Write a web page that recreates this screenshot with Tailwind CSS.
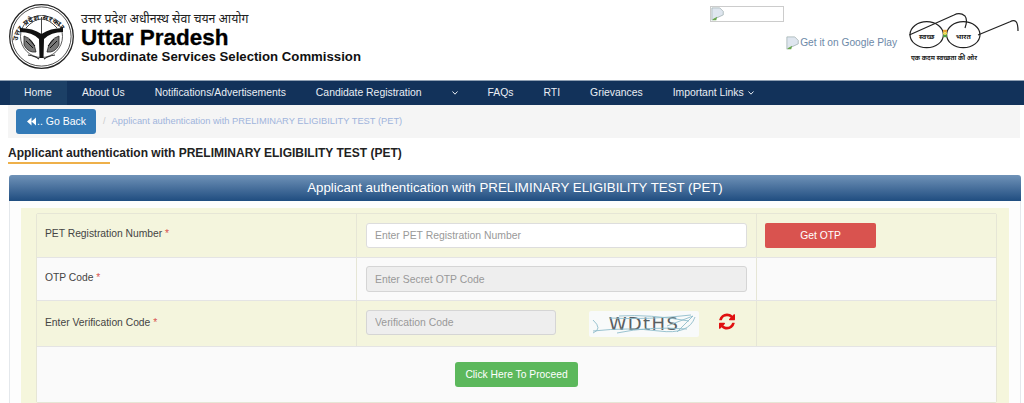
<!DOCTYPE html>
<html lang="en">
<head>
  <meta charset="UTF-8" />
  <meta name="viewport" content="width=device-width, initial-scale=1.0" />
  <title>UPSSSC PET Authentication</title>
  <script src="https://cdn.jsdelivr.net/npm/@tailwindcss/browser@4"></script>
</head>
<body class="bg-white h-screen overflow-hidden font-['Liberation_Sans','Noto_Sans',sans-serif] text-[#333]">

  <!-- Header -->
  <header class="h-[80px] flex">
    <svg class="w-[66px] h-[66px] mt-[4px] ml-[9px] shrink-0" viewBox="0 0 66 66">
      <circle cx="32.5" cy="32.5" r="31.8" fill="none" stroke="#222" stroke-width="1.3" />
      <circle cx="32.5" cy="32.5" r="29.6" fill="none" stroke="#222" stroke-width="0.8" />
      <circle cx="32.5" cy="32.5" r="21" fill="none" stroke="#333" stroke-width="0.8" />
      <path id="ring" d="M8.5 40 A23.5 23.5 0 1 1 56.5 40" fill="none" />
      <text font-size="7.4" font-weight="700" fill="#222" letter-spacing="0.5" font-family="'Noto Sans','Liberation Sans',sans-serif"><textPath href="#ring" startOffset="3">उत्तर प्रदेश सरकार</textPath></text>
      <path d="M32.5 13 V30 M17 24 Q32.5 6 48 24" fill="none" stroke="#333" stroke-width="0.9" />
      <path d="M11 24 Q24 24 32.5 30 Q41 24 54 24 L54 28 Q42 28 35 35 L34.5 54 L30.5 54 L30 35 Q23 28 11 28 Z" fill="#111" />
      <path d="M15 32 Q25 35 27 48 Q19 49 15 41 Z M50 32 Q40 35 38 48 Q46 49 50 41 Z" fill="#777" stroke="#222" stroke-width="0.8" />
      <path d="M17 37 L24 44 M20 35 L26 42 M48 37 L41 44 M45 35 L39 42" stroke="#111" stroke-width="1" />
      <path d="M19 51 Q26 52 30 55 M46 51 Q39 52 35 55" fill="none" stroke="#222" stroke-width="1.2" />
    </svg>
    <div class="ml-[6px] pt-[10px] shrink-0">
      <div class="text-[12.3px] leading-[17px] text-[#222] font-['Noto_Sans','Liberation_Serif',serif]">उत्तर प्रदेश अधीनस्थ सेवा चयन आयोग</div>
      <div class="text-[22.5px] leading-[22px] font-bold text-black [-webkit-text-stroke:0.3px_black]">Uttar Pradesh</div>
      <div class="text-[13.2px] leading-[16px] font-bold text-[#111]">Subordinate Services Selection Commission</div>
    </div>
    <div class="ml-auto w-[314px] flex shrink-0">
      <div class="w-[198px]">
        <div class="w-[74px] h-[16px] mt-[6px] border border-[#ccc] flex">
          <svg class="w-[14px] h-[14px]" viewBox="0 0 16 16">
            <path d="M1 1 H10 L14 5 V9 L1 15 Z" fill="#dfe6ef" stroke="#9aa" stroke-width="0.8" />
            <path d="M2 14 L7 11 L6 15 H2 Z" fill="#6aa84f" />
          </svg>
        </div>
        <div class="flex justify-end items-center mt-[14px] pr-[11px] text-[10.2px] text-[#6d89a8] leading-[14px]">
          <svg class="w-[14px] h-[14px] shrink-0" viewBox="0 0 16 16">
            <path d="M1 1 H10 L14 5 V9 L1 15 Z" fill="#dfe6ef" stroke="#9aa" stroke-width="0.8" />
            <path d="M2 14 L7 11 L6 15 H2 Z" fill="#6aa84f" />
          </svg>
          <span>Get it on Google Play</span>
        </div>
      </div>
      <svg class="w-[112px] h-[66px] block shrink-0" viewBox="0 0 112 66">
        <ellipse cx="18.7" cy="34.7" rx="16.7" ry="13" fill="none" stroke="#222" stroke-width="1.2" />
        <ellipse cx="55.3" cy="34.7" rx="16.7" ry="13" fill="none" stroke="#222" stroke-width="1.2" />
        <path d="M35 31 H39" stroke="#e8a33a" stroke-width="2.4" />
        <path d="M35 33.5 H39" stroke="#e8d84a" stroke-width="2.4" />
        <path d="M35 36 H39" stroke="#4f9a45" stroke-width="2.4" />
        <path d="M1.3 35 L46 15 Q52 12 57 16 Q60 20 57 28" fill="none" stroke="#222" stroke-width="1.2" />
        <path d="M70 35 L102 21.7 Q110 17 110 31" fill="none" stroke="#222" stroke-width="1.2" />
        <text x="18.7" y="39" text-anchor="middle" font-size="7" font-weight="700" fill="#222" font-family="'Noto Sans',sans-serif">स्वच्छ</text>
        <text x="55.3" y="39" text-anchor="middle" font-size="7" font-weight="700" fill="#222" font-family="'Noto Sans',sans-serif">भारत</text>
        <text x="36" y="60" text-anchor="middle" font-size="6.4" font-weight="700" fill="#222" font-family="'Noto Sans',sans-serif">एक कदम स्वच्छता की ओर</text>
      </svg>
    </div>
  </header>

  <!-- Nav -->
  <nav class="h-[25px] bg-[#12325a] border-t border-[#8fa0b3] pl-[10px] flex text-[10.4px] text-[#e9eef4] leading-[24px]">
    <a class="px-[14px] bg-[#1c4066] w-[57px]">Home</a>
    <a class="px-[15px]">About Us</a>
    <a class="px-[15px]">Notifications/Advertisements</a>
    <a class="px-[15px]">Candidate Registration</a>
    <a class="px-[15px] flex items-center">
      <svg class="w-[6px] h-[6px]" viewBox="0 0 6 6"><path d="M0.5 1.5 L3 4.2 L5.5 1.5" fill="none" stroke="#e9eef4" stroke-width="1" /></svg>
    </a>
    <a class="px-[15px]">FAQs</a>
    <a class="px-[15px]">RTI</a>
    <a class="px-[15px]">Grievances</a>
    <a class="pl-[15px] flex items-center gap-[4px]">Important Links
      <svg class="w-[6px] h-[6px]" viewBox="0 0 6 6"><path d="M0.5 1.5 L3 4.2 L5.5 1.5" fill="none" stroke="#e9eef4" stroke-width="1" /></svg>
    </a>
  </nav>

  <!-- Breadcrumb -->
  <div class="h-[33px] ml-[8px] mr-[4px] bg-[#f5f5f5] pl-[8px] pt-[4px] flex items-start text-[9.3px]">
    <button class="w-[80px] h-[25px] rounded-[3px] bg-[#337ab7] text-white text-[10.5px] flex items-center gap-[1px] pl-[11px]">
      <svg class="w-[9px] h-[9px] shrink-0" viewBox="0 0 10 9"><path d="M5 0 V9 L0 4.5 Z M10 0 V9 L5 4.5 Z" fill="#fff" /></svg>
      <span>.. Go Back</span>
    </button>
    <span class="ml-[7px] text-[#ccc] leading-[25px]">/</span>
    <span class="ml-[6px] text-[#9fb4dc] leading-[25px]">Applicant authentication with PRELIMINARY ELIGIBILITY TEST (PET)</span>
  </div>

  <!-- Title -->
  <div class="ml-[8px] mt-[8px]">
    <h1 class="text-[12px] leading-[15px] font-bold text-[#222]">Applicant authentication with PRELIMINARY ELIGIBILITY TEST (PET)</h1>
    <div class="w-[102px] h-[2px] mt-[1px] bg-[#eeb04a]"></div>
  </div>

  <!-- Panel -->
  <section class="ml-[9px] mr-[3px] mt-[11px]">
    <div class="h-[26px] rounded-t-[3px] bg-gradient-to-b from-[#7093b8] to-[#1f4d80] text-center text-white text-[13.3px] leading-[25px]">Applicant authentication with PRELIMINARY ELIGIBILITY TEST (PET)</div>
    <div class="border-x border-[#e4e8ec] pt-[7px] px-[11px] h-[202px] bg-[#fdfdfd]">
      <div class="bg-[#f5f6dc] pt-[5px] pl-[15px] pr-[12px] pb-[1px] h-full">
        <div class="border border-[#e6e6d6] rounded-[2px] text-[10.3px] text-[#444]">

          <div class="grid grid-cols-[319px_400px_1fr] h-[44px] bg-[#f4f5dd] border-b border-[#e4e4e4]">
            <div class="pl-[8px] pt-[13px] leading-[14px]">PET Registration Number <span class="text-[#d9534f]">*</span></div>
            <div class="border-l border-[#e6e6d6] pl-[9px] pt-[9px]">
              <input placeholder="Enter PET Registration Number" class="w-[381px] h-[25px] px-[8px] rounded-[3px] bg-white border border-[#ddd] text-[10.4px] placeholder:text-[#999]" />
            </div>
            <div class="border-l border-[#e6e6d6] pl-[8px] pt-[9px]">
              <button class="w-[111px] h-[25px] rounded-[2px] bg-[#d9534f] text-white text-[10.3px]">Get OTP</button>
            </div>
          </div>

          <div class="grid grid-cols-[319px_400px_1fr] h-[43px] bg-[#fafafa] border-b border-[#e4e4e4]">
            <div class="pl-[8px] pt-[13px] leading-[14px]">OTP Code <span class="text-[#d9534f]">*</span></div>
            <div class="border-l border-[#e6e6d6] pl-[9px] pt-[8px]">
              <input disabled placeholder="Enter Secret OTP Code" class="w-[381px] h-[26px] px-[8px] rounded-[3px] bg-[#eeeeee] border border-[#d5d5d5] text-[10.4px] placeholder:text-[#999]" />
            </div>
            <div class="border-l border-[#e6e6d6]"></div>
          </div>

          <div class="grid grid-cols-[319px_400px_1fr] h-[46px] bg-[#f4f5dd] border-b border-[#e4e4e4]">
            <div class="pl-[8px] pt-[15px] leading-[14px]">Enter Verification Code <span class="text-[#d9534f]">*</span></div>
            <div class="border-l border-[#e6e6d6] pl-[9px] pt-[9px] flex items-start">
              <input disabled placeholder="Verification Code" class="w-[190px] h-[25px] px-[8px] rounded-[3px] bg-[#eeeeee] border border-[#d5d5d5] text-[10.4px] placeholder:text-[#999]" />
              <div class="relative w-[110px] h-[26px] ml-[33px] mt-[1px] bg-[#f8fafa] rounded-[2px] overflow-hidden text-center text-[18px] leading-[26px] tracking-[1.4px] text-[#5a5f62] font-['DejaVu_Sans',sans-serif]">
                WDtHS
                <svg class="absolute inset-0 w-full h-full" viewBox="0 0 110 26">
                  <path d="M4 20 Q40 16 70 20 T106 6 M4 9 Q14 18 4 22 M30 5 Q60 3 100 10 M28 22 Q60 15 98 18 M78 15 L104 5 L88 21 M20 7 Q60 9 102 4" fill="none" stroke="#8fbccb" stroke-width="0.9" />
                </svg>
              </div>
              <svg class="w-[16px] h-[17px] ml-[20px] mt-[3px]" viewBox="128 128 1536 1536">
                <path fill="#e01010" d="M1639 1056q0 5-1 7-64 268-268 434.5t-478 166.5q-146 0-282.5-55t-243.5-157l-129 129q-19 19-45 19t-45-19-19-45v-448q0-26 19-45t45-19h448q26 0 45 19t19 45-19 45l-137 137q71 66 161 102t187 36q134 0 250-65t186-179q11-17 53-117 8-23 30-23h192q13 0 22.5 9.5t9.5 22.5zm25-800v448q0 26-19 45t-45 19h-448q-26 0-45-19t-19-45 19-45l138-138q-148-137-349-137-134 0-250 65t-186 179q-11 17-53 117-8 23-30 23h-199q-13 0-22.5-9.5t-9.5-22.5v-7q65-268 270-434.5t480-166.5q146 0 284 55.5t245 156.5l130-129q19-19 45-19t45 19 19 45z" />
              </svg>
            </div>
            <div class="border-l border-[#e6e6d6]"></div>
          </div>

          <div class="h-[55px] bg-[#fafafa] pt-[15px] pl-[418px]">
            <button class="w-[123px] h-[25px] rounded-[3px] bg-[#5cb85c] text-white text-[10.3px]">Click Here To Proceed</button>
          </div>
        </div>
      </div>
    </div>
  </section>
</body>
</html>
